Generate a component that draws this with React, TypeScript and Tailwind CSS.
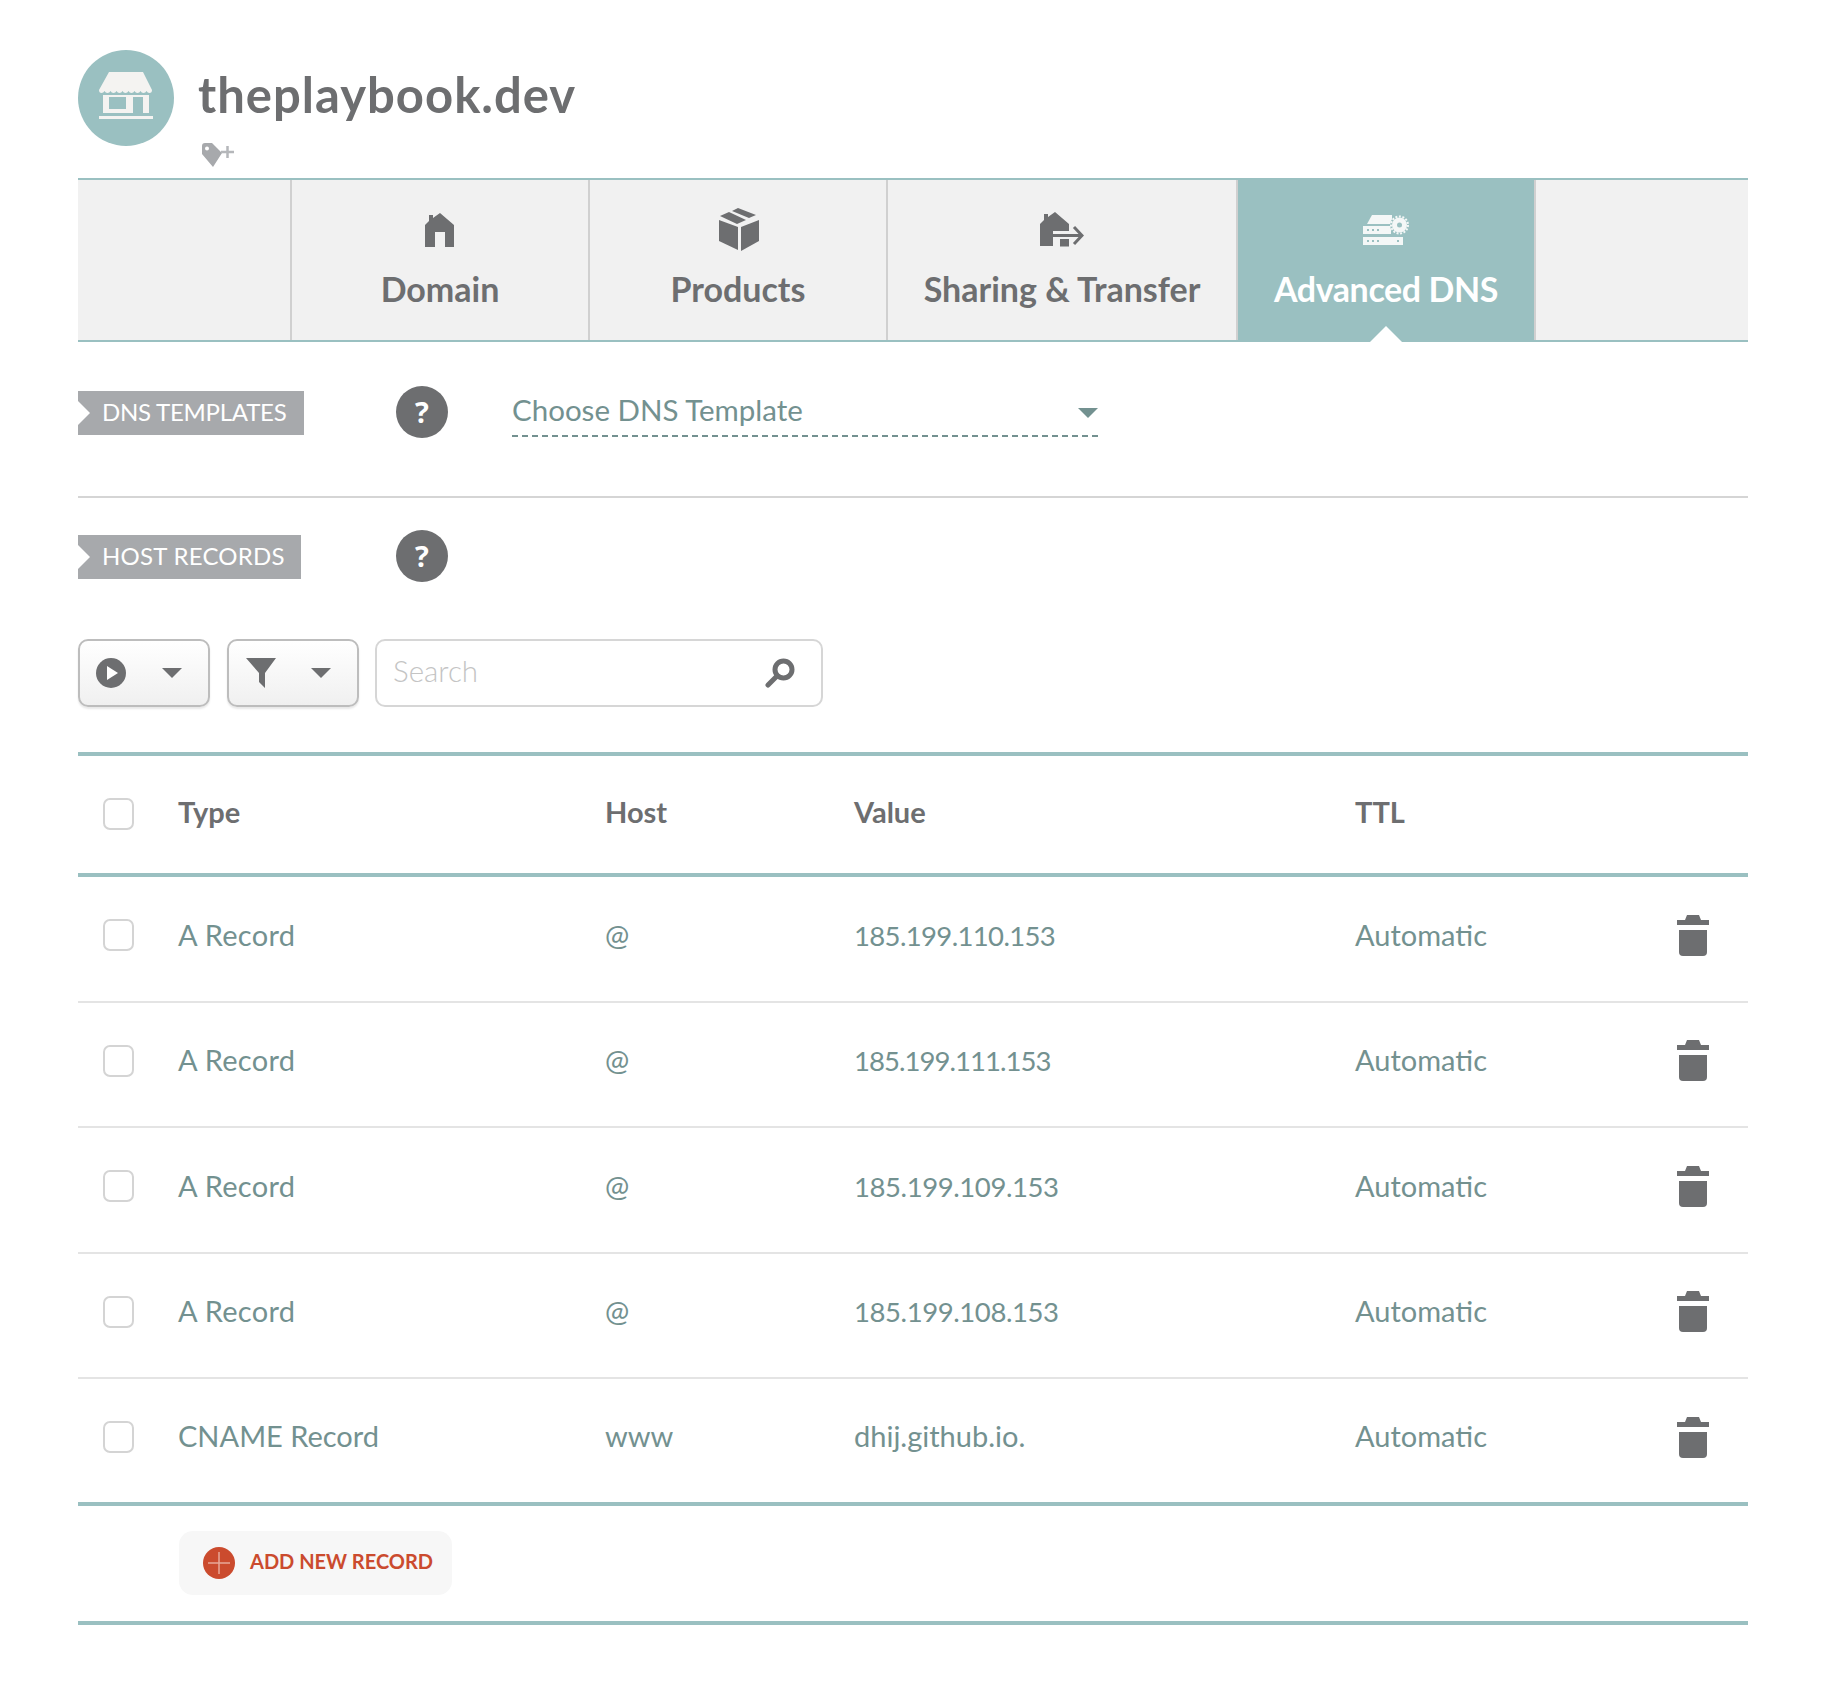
import React from "react";

const Store = () => (
  <svg width="96" height="96" viewBox="0 0 96 96" className="shrink-0">
    <circle cx="48" cy="48" r="48" fill="#9ac0c1" />
    <path d="M31 22H65L74 40Q74 43 71.5 43Q69.5 43 68.5 41Q67.5 43 65.5 43Q63.5 43 62.5 41Q61.5 43 59.5 43Q57.5 43 56.5 41Q55.5 43 53.5 43Q51.5 43 50.5 41Q49.5 43 47.500 43Q45.5 43 44.5 41Q43.5 43 41.5 43Q39.5 43 38.500 41Q37.5 43 35.5 43Q33.500 43 32.500 41Q31.5 43 29.5 43Q27.5 43 26.500 41Q25.500 43 23.5 43Q21 43 21 40Z" fill="#f4f3f1" />
    <path fillRule="evenodd" d="M25 45H71V63H65V47H55V63H25ZM31 47V59H48V47Z" fill="#f4f3f1" />
    <rect x="21" y="66" width="54" height="3" fill="#f4f3f1" />
  </svg>
);

const Tag = () => (
  <svg width="32" height="24" viewBox="0 0 32 24" className="absolute left-[124px] top-[93px]">
    <path fillRule="evenodd" d="M0 3Q0 0 3 0H10L20 10L11 24L0 11ZM5 3.500A2 2 0 1 0 5 7.500A2 2 0 1 0 5 3.500Z" fill="#a7a9ac" />
    <path d="M19 9H32M25.500 3V15" stroke="#b5b7ba" strokeWidth="2.500" />
  </svg>
);

const Home = () => (
  <svg width="30" height="34" viewBox="0 0 30 34">
    <path d="M15 0L29 12V34H20V19H10V34H0V12L4 8V2H8V5Z" fill="#6d6e70" />
  </svg>
);

const Box = () => (
  <svg width="41" height="43" viewBox="0 0 41 43">
    <path d="M2 8L11 4L28 12L19 16Z" fill="#6d6e70" />
    <path d="M14 3L20 0L38 7L31 10Z" fill="#6d6e70" />
    <path d="M1 12L20 19V42L1 33Z" fill="#6d6e70" />
    <path d="M23 19L41 12V33L23 43Z" fill="#6d6e70" />
  </svg>
);

const Sharing = () => (
  <svg width="44" height="35" viewBox="0 0 44 35">
    <path d="M15 0L29 12V19H13V34H0V12L4 8V2H8V5Z" fill="#6d6e70" />
    <rect x="20" y="27" width="9" height="7.500" fill="#6d6e70" />
    <path d="M13 23.500H41M34 15L42 23.500L34 32" stroke="#6d6e70" strokeWidth="3" fill="none" />
  </svg>
);

const Server = () => (
  <svg width="46" height="30" viewBox="0 0 46 30">
    <path d="M4 9L9 0H29V9Z" fill="#f4f7f7" />
    <rect y="11" width="28" height="8" fill="#f4f7f7" />
    <rect y="22" width="40" height="8" fill="#f4f7f7" />
    <g fill="#9ac0c1">
      <rect x="4" y="14" width="2" height="2" />
      <rect x="9" y="14" width="2" height="2" />
      <rect x="14" y="14" width="2" height="2" />
      <rect x="4" y="25" width="2" height="2" />
      <rect x="9" y="25" width="2" height="2" />
      <rect x="14" y="25" width="2" height="2" />
      <rect x="34" y="25" width="2" height="2" />
    </g>
    <circle cx="36.500" cy="10" r="9.500" fill="#9ac0c1" />
    <circle cx="36.500" cy="10" r="7.500" fill="#f4f7f7" />
    <circle cx="36.500" cy="10" r="8.500" fill="none" stroke="#f4f7f7" strokeWidth="2" strokeDasharray="2 1.560" />
    <circle cx="36.500" cy="10" r="2.500" fill="#9ac0c1" />
  </svg>
);

const Trash = () => (
  <svg width="32" height="41" viewBox="0 0 32 41">
    <path d="M0 10V5H8L10 0H22L24 5H32V10Z" fill="#6d6e70" />
    <path d="M2 15H30V37Q30 41 26 41H6Q2 41 2 37Z" fill="#6d6e70" />
  </svg>
);

const Label = ({ text, width }: { text: string; width: string }) => (
  <div
    className={`relative flex h-[44px] items-center bg-[#a7a9ac] pb-[2px] pl-[24px] font-['Lato',sans-serif] text-[24px] font-normal text-white ${width}`}
  >
    <span className="absolute left-0 top-[10px] h-0 w-0 border-y-[12px] border-l-[12px] border-y-transparent border-l-white" />
    {text}
  </div>
);

const Help = () => (
  <div className="flex h-[52px] w-[52px] items-center justify-center rounded-full bg-[#6d6e70] font-['Open_Sans',sans-serif] text-[29px] font-bold text-white">
    ?
  </div>
);

const Caret = ({ color = "#6d6e70" }: { color?: string }) => (
  <svg width="20" height="10" viewBox="0 0 20 10">
    <path d="M0 0H20L10 10Z" fill={color} />
  </svg>
);

const tabs = [
  { name: "Domain", icon: <Home />, w: "w-[298px]" },
  { name: "Products", icon: <Box />, w: "w-[298px]" },
  { name: "Sharing & Transfer", icon: <Sharing />, w: "w-[350px]" },
];

const rows = [
  { t: "A Record", tc: "tracking-[0.3px]", h: "@", v: "185.199.110.153", c: "text-[27.500px] tracking-[-0.65px]" },
  { t: "A Record", tc: "tracking-[0.3px]", h: "@", v: "185.199.111.153", c: "text-[27.500px] tracking-[-0.95px]" },
  { t: "A Record", tc: "tracking-[0.3px]", h: "@", v: "185.199.109.153", c: "text-[27.500px] tracking-[-0.42px]" },
  { t: "A Record", tc: "tracking-[0.3px]", h: "@", v: "185.199.108.153", c: "text-[27.500px] tracking-[-0.42px]" },
  { t: "CNAME Record", tc: "", h: "www", v: "dhij.github.io.", c: "" },
];

const Check = () => (
  <div className="ml-[25px] h-[32px] w-[31px] rounded-[7px] border-[2px] border-[#d4d4d4] bg-white" />
);

const Cols = ({ a, b, c, d, end, lift }: { a: React.ReactNode; b: React.ReactNode; c: React.ReactNode; d: React.ReactNode; end?: React.ReactNode; lift: string }) => (
  <>
    <div className="w-[100px] shrink-0">
      <Check />
    </div>
    <div className={`w-[427px] shrink-0 ${lift}`}>{a}</div>
    <div className={`w-[249px] shrink-0 ${lift}`}>{b}</div>
    <div className={`w-[501px] shrink-0 ${lift}`}>{c}</div>
    <div className={`w-[322px] shrink-0 ${lift}`}>{d}</div>
    {end}
  </>
);

export default function App() {
  return (
    <div className="min-h-[1682px] w-[1824px] bg-white pl-[78px] pr-[76px] pt-[50px] font-['Lato',sans-serif]">
      <div className="relative flex h-[128px] items-start gap-[24px]">
        <Store />
        <h1 className="mt-[11px] text-[49px] font-bold leading-[66px] tracking-[1px] text-[#6d6e70]">theplaybook.dev</h1>
        <Tag />
      </div>

      <div className="flex h-[164px] border-y-2 border-[#9ac0c1] bg-[#f1f1f1]">
        <div className="w-[214px] shrink-0 border-r-2 border-[#d0d0d0]" />
        {tabs.map((t) => (
          <div key={t.name} className={`flex shrink-0 flex-col items-center border-r-2 border-[#d0d0d0] ${t.w}`}>
            <div className="mt-[17px] flex h-[65px] items-center">{t.icon}</div>
            <div className="text-[34px] font-bold leading-[54px] text-[#6d6e70]">{t.name}</div>
          </div>
        ))}
        <div className="relative flex w-[296px] shrink-0 flex-col items-center bg-[#9ac0c1]">
          <div className="mt-[17px] flex h-[65px] items-center"><Server /></div>
          <div className="text-[34px] font-bold leading-[54px] tracking-[-0.4px] text-white">Advanced DNS</div>
          <span className="absolute -bottom-[2px] left-[132px] h-0 w-0 border-x-[16px] border-b-[16px] border-x-transparent border-b-white" />
        </div>
        <div className="flex-1 border-l-2 border-[#d0d0d0]" />
      </div>

      <div className="flex h-[156px] items-start border-b-2 border-[#d5d5d5] pt-[44px]">
        <div className="w-[318px] shrink-0 tracking-[-0.25px]">
          <div className="mt-[5px]"><Label text="DNS TEMPLATES" width="w-[226px]" /></div>
        </div>
        <Help />
        <div className="ml-[64px] flex h-[51px] w-[586px] items-center justify-between border-b-2 border-dashed border-[#739190] text-[29.500px] font-normal text-[#739190]">
          <span>Choose DNS Template</span>
          <span className="mt-[5px] flex"><Caret color="#739190" /></span>
        </div>
      </div>

      <div className="flex items-start pt-[32px]">
        <div className="w-[318px] shrink-0 tracking-[0.25px]">
          <div className="mt-[5px]"><Label text="HOST RECORDS" width="w-[223px]" /></div>
        </div>
        <Help />
      </div>

      <div className="mt-[57px] flex items-center gap-[17px]">
        <div className="flex h-[68px] w-[132px] items-center justify-between rounded-[10px] border-2 border-[#bdbdbd] bg-gradient-to-b from-white to-[#f0f0f0] pl-[16px] pr-[26px] shadow-[0_2px_2px_#e8e8e8]">
          <svg width="30" height="30" viewBox="0 0 30 30">
            <circle cx="15" cy="15" r="15" fill="#6d6e70" />
            <path d="M11 8L22 15L11 22Z" fill="#fff" />
          </svg>
          <Caret />
        </div>
        <div className="flex h-[68px] w-[132px] items-center justify-between rounded-[10px] border-2 border-[#bdbdbd] bg-gradient-to-b from-white to-[#f0f0f0] pl-[17px] pr-[26px] shadow-[0_2px_2px_#e8e8e8]">
          <svg width="30" height="30" viewBox="0 0 30 30">
            <path d="M0 0H30L19 15V30L13 24V15Z" fill="#6d6e70" />
          </svg>
          <Caret />
        </div>
        <div className="-ml-[1px] flex h-[68px] w-[448px] items-center justify-between rounded-[10px] border-2 border-[#d6d6d6] bg-white pb-[3px] pl-[16px] pr-[26px] text-[29.500px] font-light text-[#c4c4c4]">
          <span>Search</span>
          <svg width="30" height="30" viewBox="0 0 30 30" className="mt-[3px]">
            <circle cx="18.500" cy="11.500" r="8.500" fill="none" stroke="#6d6e70" strokeWidth="5" />
            <path d="M11 19L3 27" stroke="#6d6e70" strokeWidth="5" strokeLinecap="round" />
          </svg>
        </div>
      </div>

      <div className="mt-[45px] border-y-4 border-[#9ac0c1]">
        <div className="flex h-[117px] items-center pb-[2px] text-[29px] font-bold text-[#6d6e70]">
          <Cols lift="pb-[4px]" a="Type" b="Host" c="Value" d="TTL" />
        </div>
      </div>

      <div>
        {rows.map((r, i) => (
          <div
            key={i}
            className={`flex items-center pb-[7px] text-[29px] font-normal text-[#739190] ${i < 4 ? "h-[125.500px] border-b-2 border-[#e4e4e4]" : "h-[123px]"}`}
          >
            <Cols lift="pb-[2px]" a={<span className={r.tc}>{r.t}</span>} b={r.h} c={<span className={r.c}>{r.v}</span>} d="Automatic" end={<Trash />} />
          </div>
        ))}
      </div>

      <div className="flex h-[123px] items-center border-y-4 border-[#9ac0c1] pb-[2px] pl-[101px]">
        <div className="flex h-[64px] w-[273px] items-center gap-[15px] rounded-[14px] bg-[#f7f7f7] pl-[24px] text-[20px] font-bold text-[#cb4b2e]">
          <svg width="32" height="32" viewBox="0 0 32 32">
            <circle cx="16" cy="16" r="16" fill="#cb4b2e" />
            <path d="M5 16H27M16 5V27" stroke="#e8a898" strokeWidth="1.500" />
          </svg>
          <span className="pb-[3px]">ADD NEW RECORD</span>
        </div>
      </div>
    </div>
  );
}
